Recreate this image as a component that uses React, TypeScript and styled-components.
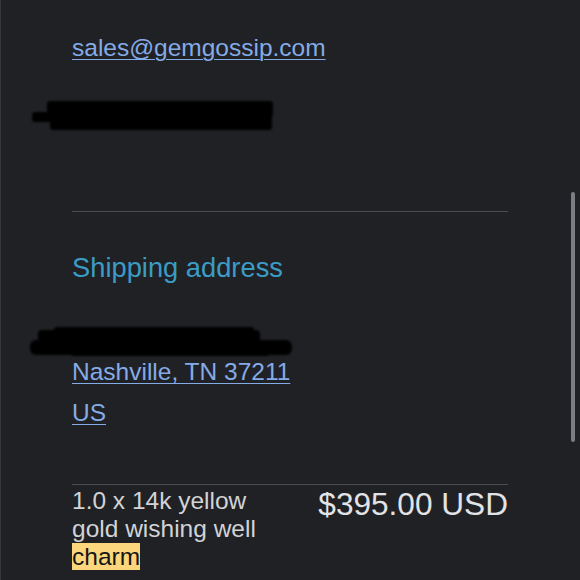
import React from "react";
import styled, { createGlobalStyle } from "styled-components";

const Global = createGlobalStyle`
  html, body { margin: 0; padding: 0; background: #202125; }
  body { font-family: "Liberation Sans", Arial, sans-serif; }
`;

const Page = styled.div`
  position: relative;
  width: 580px;
  height: 580px;
  overflow: hidden;
  background: #202125;
  border-left: 1px solid #36373b;
  box-sizing: border-box;
`;

const Content = styled.div`
  display: flex;
  flex-direction: column;
  width: 436px;
  padding: 34px 0 0 71px;
`;

const Link = styled.a<{ $mt?: number }>`
  display: block;
  margin-top: ${(p) => p.$mt ?? 0}px;
  font-size: 24.5px;
  line-height: 28px;
  color: #84abe6;
  text-decoration: underline;
  text-decoration-thickness: 1px;
  text-underline-offset: 3px;
  width: max-content;
`;

const Redaction = styled.svg<{ $mt: number; $ml: number }>`
  display: block;
  margin-top: ${(p) => p.$mt}px;
  margin-left: ${(p) => p.$ml}px;
  overflow: visible;
`;

const Divider = styled.hr<{ $mt: number }>`
  margin: ${(p) => p.$mt}px 0 0 0;
  border: none;
  height: 1px;
  width: 436px;
  background: #4b4c51;
`;

const Heading = styled.h2`
  margin: 40px 0 0 0;
  font-weight: 400;
  font-size: 27.3px;
  line-height: 32px;
  color: #3b9cc5;
`;

const ItemRow = styled.div`
  display: flex;
  justify-content: space-between;
  align-items: flex-start;
  margin-top: 2px;
`;

const ItemName = styled.div`
  width: 205px;
  font-size: 24.5px;
  line-height: 28px;
  color: #d2d3d6;
`;

const Mark = styled.mark`
  background: #fcd67c;
  color: #161616;
`;

const Price = styled.div`
  font-size: 31.6px;
  line-height: 34px;
  color: #e2e3e6;
  white-space: nowrap;
`;

const Scrollbar = styled.div`
  position: absolute;
  left: 570px;
  top: 192px;
  width: 4px;
  height: 250px;
  border-radius: 2px;
  background: #7c7d82;
`;

export default function App() {
  return (
    <>
      <Global />
      <Page>
        <Content>
          <Link href="#">sales@gemgossip.com</Link>
          <Redaction $mt={37} $ml={-40} width="242" height="32" viewBox="0 0 242 32">
            <defs>
              <filter id="b1" x="-5%" y="-20%" width="110%" height="140%">
                <feGaussianBlur stdDeviation="0.9" />
              </filter>
            </defs>
            <g fill="#040404" filter="url(#b1)">
              <rect x="15" y="2" width="226" height="16" rx="3" />
              <rect x="0" y="13" width="215" height="10" rx="3" />
              <rect x="18" y="15" width="222" height="16" rx="3" />
            </g>
          </Redaction>
          <Divider $mt={80} />
          <Heading>Shipping address</Heading>
          <Redaction $mt={42} $ml={-42} width="262" height="32" viewBox="0 0 262 32">
            <defs>
              <filter id="b2" x="-5%" y="-20%" width="110%" height="140%">
                <feGaussianBlur stdDeviation="0.9" />
              </filter>
            </defs>
            <g fill="#040404" filter="url(#b2)">
              <rect x="24" y="1" width="200" height="8" rx="3" />
              <rect x="8" y="4" width="222" height="16" rx="4" />
              <rect x="0" y="14" width="262" height="15" rx="6" />
              <rect x="40" y="20" width="200" height="10" rx="4" />
            </g>
          </Redaction>
          <Link href="#">Nashville, TN 37211</Link>
          <Link href="#" $mt={13}>US</Link>
          <Divider $mt={57} />
          <ItemRow>
            <ItemName>
              1.0 x 14k yellow gold wishing well <Mark>charm</Mark>
            </ItemName>
            <Price>$395.00 USD</Price>
          </ItemRow>
        </Content>
        <Scrollbar />
      </Page>
    </>
  );
}
